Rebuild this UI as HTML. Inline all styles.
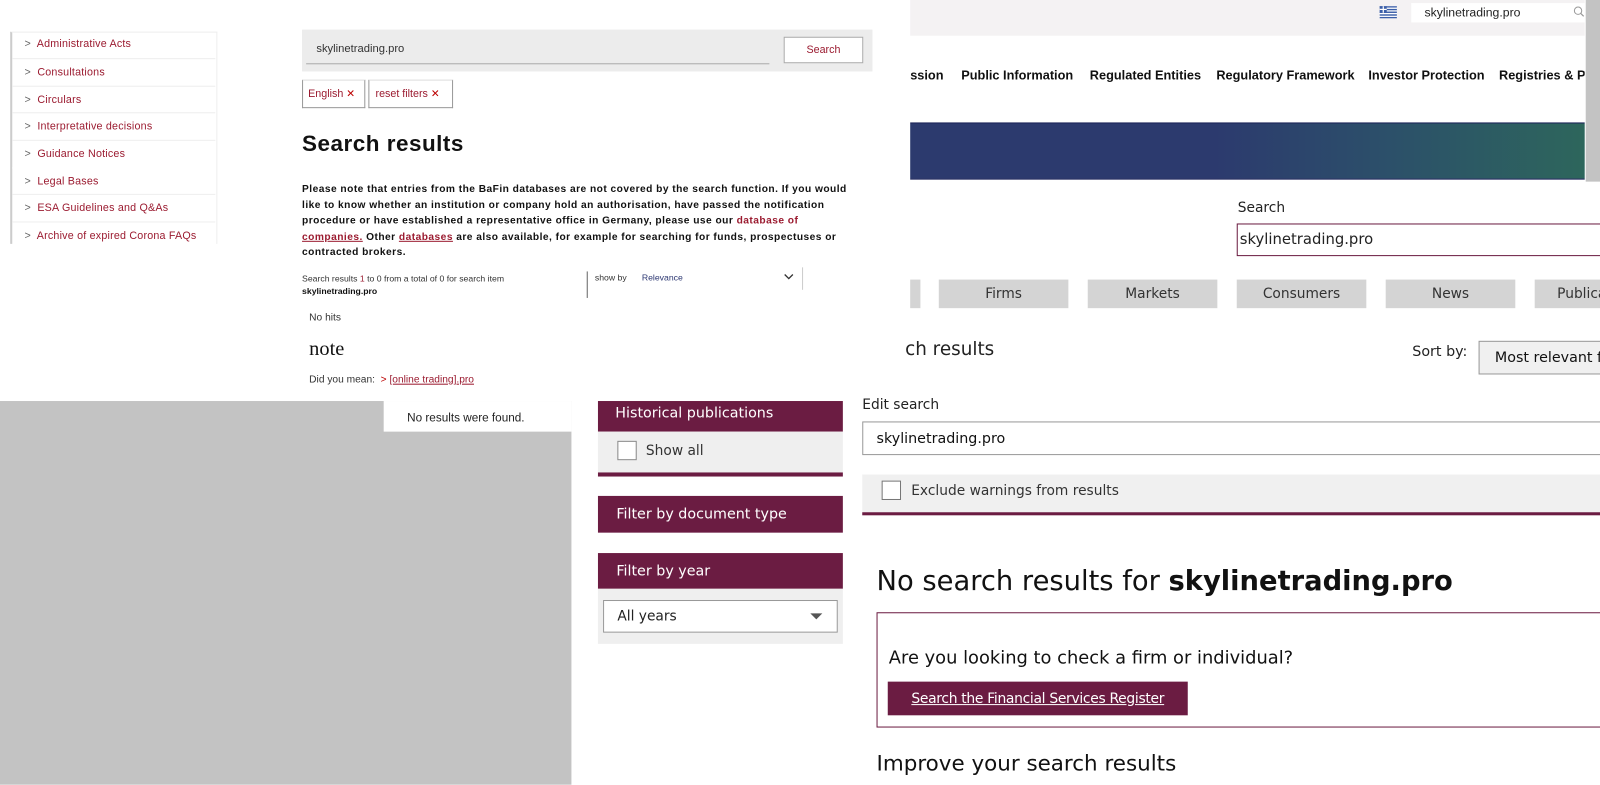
<!DOCTYPE html>
<html><head><meta charset="utf-8">
<style>
html,body{margin:0;padding:0;background:#fff;overflow:hidden;width:1600px;height:785px}
#w{position:absolute;left:0;top:0;width:1568px;height:769px;transform:scale(1.020408);transform-origin:0 0;font-family:"Liberation Sans",sans-serif}
.a{position:absolute;white-space:nowrap}
.dv{font-family:"DejaVu Sans","Liberation Sans",sans-serif}
.mar{background:#6b1c42;color:#fff}
.nv{position:absolute;top:67px;font-size:12.5px;color:#111;font-family:'Liberation Sans Narrow','Liberation Sans',sans-serif;font-weight:bold;white-space:nowrap}
</style></head><body><div id="w">

<!-- Left sidebar -->
<div class="a" style="left:10px;top:31px;width:200px;height:207px;border-left:2px solid #ccc;border-right:1px solid #eee;border-top:1px solid #eee"></div>
<div class="a" style="left:12px;top:31px;width:199px;font-size:10.5px;color:#9b1b30;letter-spacing:0.2px">
<div style="height:26px;line-height:24px;border-bottom:1px solid #eee;padding-left:12px"><span style="color:#666">&gt;</span>&nbsp; Administrative Acts</div>
<div style="height:26px;line-height:26px;border-bottom:1px solid #eee;padding-left:12px"><span style="color:#666">&gt;</span>&nbsp; Consultations</div>
<div style="height:25px;line-height:26px;border-bottom:1px solid #eee;padding-left:12px"><span style="color:#666">&gt;</span>&nbsp; Circulars</div>
<div style="height:26px;line-height:26px;border-bottom:1px solid #eee;padding-left:12px"><span style="color:#666">&gt;</span>&nbsp; Interpretative decisions</div>
<div style="height:26px;line-height:26px;border-bottom:1px solid #fff;padding-left:12px"><span style="color:#666">&gt;</span>&nbsp; Guidance Notices</div>
<div style="height:25px;line-height:26px;border-bottom:1px solid #eee;padding-left:12px"><span style="color:#666">&gt;</span>&nbsp; Legal Bases</div>
<div style="height:26px;line-height:26px;border-bottom:1px solid #eee;padding-left:12px"><span style="color:#666">&gt;</span>&nbsp; ESA Guidelines and Q&amp;As</div>
<div style="height:26px;line-height:26px;padding-left:12px"><span style="color:#666">&gt;</span>&nbsp; Archive of expired Corona FAQs</div>
</div>

<!-- BaFin search -->
<div class="a" style="left:296px;top:29px;width:559px;height:41px;background:#ececec"></div>
<div class="a" style="left:300px;top:62px;width:454px;height:1px;background:#aaa"></div>
<div class="a" style="left:310px;top:42px;font-size:11px;color:#333">skylinetrading.pro</div>
<div class="a" style="left:768px;top:36px;width:78px;height:26px;background:#fff;border:1px solid #aaa;box-sizing:border-box;font-size:10.5px;color:#9b1b30;text-align:center;line-height:24px">Search</div>
<div class="a" style="left:296px;top:78px;width:62px;height:28px;border:1px solid #999;border-top-color:#ddd;box-sizing:border-box;font-size:10.5px;color:#9b1b30;line-height:26px;padding-left:5px">English <span style="color:#b00">✕</span></div>
<div class="a" style="left:361px;top:78px;width:83px;height:28px;border:1px solid #999;border-top-color:#ddd;box-sizing:border-box;font-size:10.5px;color:#9b1b30;line-height:26px;padding-left:6px">reset filters <span style="color:#b00">✕</span></div>
<div class="a" style="left:296px;top:128px;font-size:22px;font-weight:bold;color:#111;letter-spacing:0.5px">Search results</div>
<div class="a" style="left:296px;top:178px;font-size:10px;font-weight:bold;line-height:15.5px;color:#111;letter-spacing:0.45px">Please note that entries from the BaFin databases are not covered by the search function. If you would<br>like to know whether an institution or company hold an authorisation, have passed the notification<br>procedure or have established a representative office in Germany, please use our <span style="color:#9b1b30">database of</span><br><span style="color:#9b1b30;text-decoration:underline">companies.</span> Other <span style="color:#9b1b30;text-decoration:underline">databases</span> are also available, for example for searching for funds, prospectuses or<br>contracted brokers.</div>
<div class="a" style="left:296px;top:267px;font-size:8.5px;color:#333;line-height:12px">Search results <span style="color:#9b1b30">1</span> to 0 from a total of 0 for search item<br><b style="color:#111">skylinetrading.pro</b></div>
<div class="a" style="left:575px;top:266px;width:1px;height:26px;background:#666"></div>
<div class="a" style="left:583px;top:267px;font-size:8.5px;color:#333">show by</div>
<div class="a" style="left:629px;top:267px;font-size:8.5px;color:#2a3570">Relevance</div>
<svg class="a" style="left:768px;top:268px" width="10" height="7"><path d="M1 1 L5 5 L9 1" stroke="#333" fill="none" stroke-width="1.3"/></svg>
<div class="a" style="left:786px;top:262px;width:1px;height:22px;background:#ccc"></div>
<div class="a" style="left:303px;top:306px;font-size:10px;color:#333">No hits</div>
<div class="a" style="left:303px;top:331px;font-size:20px;color:#111;font-family:'Liberation Serif',serif">note</div>
<div class="a" style="left:303px;top:367px;font-size:10px;color:#333">Did you mean: &nbsp;<span style="color:#b00">&gt;</span> <span style="color:#9b1b30;text-decoration:underline">[online trading].pro</span></div>

<!-- gray region -->
<div class="a" style="left:0;top:393px;width:560px;height:376px;background:#c3c3c3"></div>
<div class="a" style="left:376px;top:393px;width:184px;height:30px;background:#fff"></div>
<div class="a" style="left:399px;top:404px;font-size:11.5px;color:#222">No results were found.</div>

<!-- Filter panel -->
<div class="a mar dv" style="left:586px;top:393px;width:240px;height:30px;font-size:14px;line-height:24px;padding-left:17px;box-sizing:border-box">Historical publications</div>
<div class="a" style="left:586px;top:423px;width:240px;height:40px;background:#efefef"></div>
<div class="a" style="left:586px;top:463px;width:240px;height:4px;background:#6b1c42"></div>
<div class="a" style="left:605px;top:432px;width:19px;height:19px;background:#fff;border:1px solid #888;box-sizing:border-box"></div>
<div class="a dv" style="left:633px;top:434px;font-size:13.5px;color:#333">Show all</div>
<div class="a mar dv" style="left:586px;top:486px;width:240px;height:36px;font-size:14px;line-height:36px;padding-left:18px;box-sizing:border-box">Filter by document type</div>
<div class="a mar dv" style="left:586px;top:542px;width:240px;height:35px;font-size:14px;line-height:36px;padding-left:18px;box-sizing:border-box">Filter by year</div>
<div class="a" style="left:586px;top:577px;width:240px;height:54px;background:#efefef"></div>
<div class="a dv" style="left:591px;top:588px;width:230px;height:32px;background:#fff;border:1px solid #999;box-sizing:border-box;font-size:13.5px;line-height:30px;padding-left:13px;color:#222">All years</div>
<svg class="a" style="left:794px;top:601px" width="12" height="7"><path d="M0 0 L12 0 L6 6Z" fill="#555"/></svg>

<!-- Top-right panel -->
<div class="a" style="left:892px;top:0;width:661px;height:35px;background:#f4f2f3"></div>
<svg class="a" style="left:1352px;top:6px" width="17" height="12"><rect width="17" height="12" rx="1" fill="#fff"/><g fill="#3a5ea8"><rect y="0" width="17" height="1.4"/><rect y="2.7" width="17" height="1.4"/><rect y="5.3" width="17" height="1.4"/><rect y="8" width="17" height="1.4"/><rect y="10.6" width="17" height="1.4"/><rect width="7" height="6.5"/></g><rect x="3" y="0" width="1.2" height="6.5" fill="#fff"/><rect x="0" y="2.6" width="7" height="1.2" fill="#fff"/></svg>
<div class="a" style="left:1383px;top:3px;width:170px;height:19px;background:#fff"></div>
<div class="a" style="left:1396px;top:5px;font-size:12px;color:#222">skylinetrading.pro</div>
<svg class="a" style="left:1542px;top:6px" width="11" height="11"><circle cx="4.5" cy="4.5" r="3.6" stroke="#999" fill="none" stroke-width="1"/><path d="M7 7 L10 10" stroke="#999" stroke-width="1.2"/></svg>
<div class="nv" style="left:892px">ssion</div>
<div class="nv" style="left:942px">Public Information</div>
<div class="nv" style="left:1068px">Regulated Entities</div>
<div class="nv" style="left:1192px">Regulatory Framework</div>
<div class="nv" style="left:1341px">Investor Protection</div>
<div class="nv" style="left:1469px;width:84px;overflow:hidden">Registries &amp; Portals</div>
<div class="a" style="left:892px;top:120px;width:661px;height:56px;border-top:1px solid #101850;border-bottom:1px solid #101850;box-sizing:border-box;background:linear-gradient(90deg,#2c3a6e 0%,#2c3a6e 45%,#2c4f6a 70%,#2d665c 100%)"></div>
<div class="a" style="left:1554px;top:0;width:14px;height:178px;background:#c3c3c3"></div>

<!-- FCA panel -->
<div class="a dv" style="left:1213px;top:196px;font-size:13.5px;color:#222">Search</div>
<div class="a" style="left:1212px;top:219px;width:360px;height:32px;border:1px solid #6b1c42;box-sizing:border-box"></div>
<div class="a dv" style="left:1215px;top:227px;font-size:14.5px;color:#222">skylinetrading.pro</div>
<div class="a" style="left:892px;top:274px;width:10px;height:28px;background:#d4d4d4"></div>
<div class="a dv" style="left:920px;top:274px;width:127px;height:28px;background:#d4d4d4;font-size:13.5px;line-height:29px;text-align:center;color:#333">Firms</div>
<div class="a dv" style="left:1066px;top:274px;width:127px;height:28px;background:#d4d4d4;font-size:13.5px;line-height:29px;text-align:center;color:#333">Markets</div>
<div class="a dv" style="left:1212px;top:274px;width:127px;height:28px;background:#d4d4d4;font-size:13.5px;line-height:29px;text-align:center;color:#333">Consumers</div>
<div class="a dv" style="left:1358px;top:274px;width:127px;height:28px;background:#d4d4d4;font-size:13.5px;line-height:29px;text-align:center;color:#333">News</div>
<div class="a dv" style="left:1504px;top:274px;width:64px;height:28px;background:#d4d4d4;font-size:13.5px;line-height:29px;padding-left:22px;box-sizing:border-box;color:#333;overflow:hidden">Publications</div>
<div class="a dv" style="left:887px;top:332px;font-size:18px;color:#222">ch results</div>
<div class="a dv" style="left:1384px;top:337px;font-size:14px;color:#222">Sort by:</div>
<div class="a dv" style="left:1449px;top:334px;width:125px;height:33px;background:#f0f0f0;border:1px solid #999;box-sizing:border-box;font-size:14px;line-height:33px;padding-left:15px;color:#111;overflow:hidden">Most relevant first</div>
<div class="a dv" style="left:845px;top:389px;font-size:13.5px;color:#222">Edit search</div>
<div class="a" style="left:845px;top:413px;width:730px;height:33px;border:1px solid #999;box-sizing:border-box"></div>
<div class="a dv" style="left:859px;top:422px;font-size:14px;color:#111">skylinetrading.pro</div>
<div class="a" style="left:845px;top:465px;width:723px;height:37px;background:#f0f0f0"></div>
<div class="a" style="left:845px;top:502px;width:723px;height:3px;background:#6b1c42"></div>
<div class="a" style="left:864px;top:471px;width:19px;height:19px;background:#fff;border:1px solid #777;box-sizing:border-box"></div>
<div class="a dv" style="left:893px;top:473px;font-size:13.5px;color:#333">Exclude warnings from results</div>
<div class="a dv" style="left:859px;top:554px;font-size:26.8px;color:#111">No search results for <b>skylinetrading.pro</b></div>
<div class="a" style="left:859px;top:600px;width:715px;height:113px;border:1px solid #6b1c42;box-sizing:border-box"></div>
<div class="a dv" style="left:871px;top:635px;font-size:17.5px;color:#111">Are you looking to check a firm or individual?</div>
<div class="a mar dv" style="left:870px;top:668px;width:294px;height:33px;font-size:13.6px;line-height:34px;text-align:center;text-decoration:underline;letter-spacing:-0.3px">Search the Financial Services Register</div>
<div class="a dv" style="left:859px;top:736px;font-size:21px;color:#111">Improve your search results</div>

</div></body></html>
